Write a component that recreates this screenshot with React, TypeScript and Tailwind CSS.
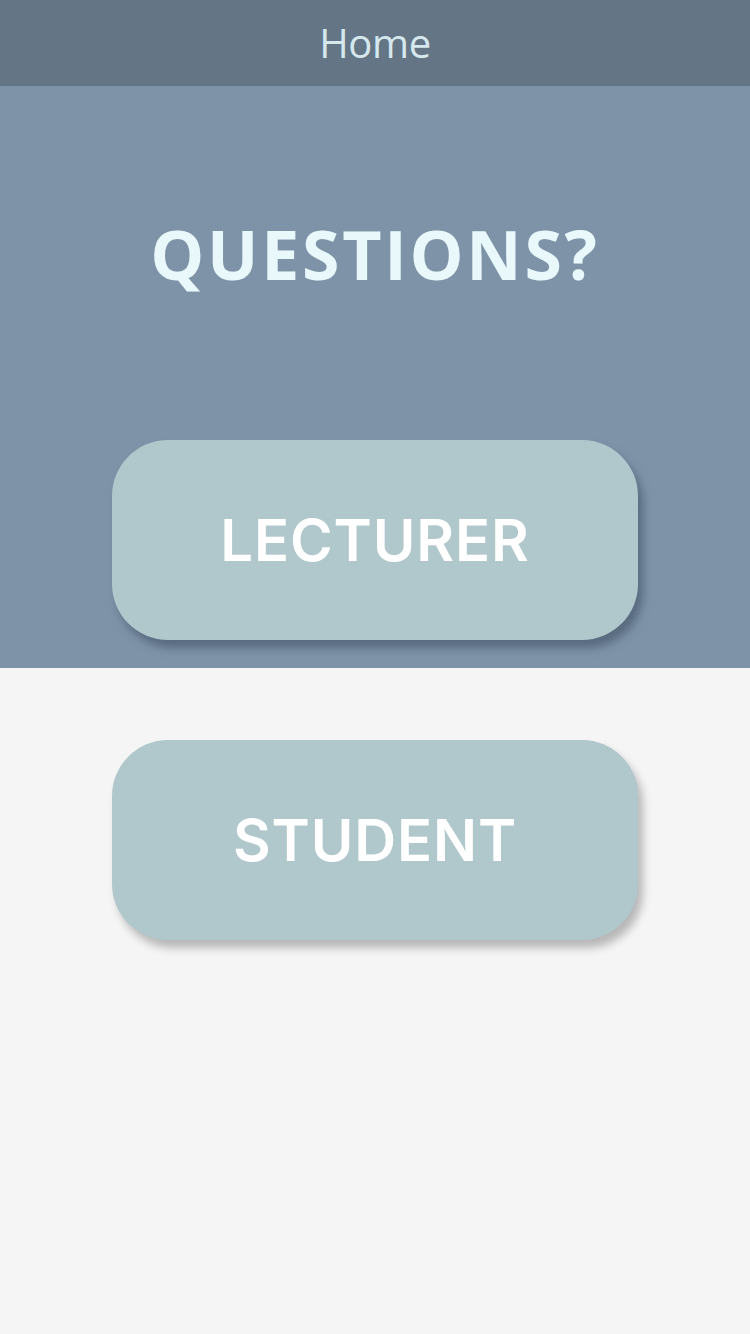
export default function App() {
  return (
    <div className="min-h-[1334px] w-[750px] bg-[#f5f5f5]">
      <header className="flex h-[86px] items-center justify-center bg-[#647586]">
        <h1 className="font-['Open_Sans',sans-serif] text-[40px] leading-none tracking-[-0.01em] text-[#d5e8ee]">Home</h1>
      </header>

      <section className="flex h-[582px] flex-col items-center bg-[#7e93a8]">
        <h2 className="mt-[130px] font-['Open_Sans',sans-serif] text-[68px] font-bold leading-[76px] tracking-[0.04em] text-[#e8f8fb]">
          QUESTIONS?
        </h2>
        <button className="mt-[148px] flex h-[200px] w-[526px] items-center justify-center rounded-[56px] bg-[#b0c7cc] font-['Inter',sans-serif] text-[58px] font-semibold tracking-[0.015em] text-white shadow-[5px_8px_8px_rgba(60,75,95,0.55)]">
          LECTURER
        </button>
      </section>

      <div className="flex justify-center pt-[72px]">
        <button className="flex h-[200px] w-[526px] items-center justify-center rounded-[56px] bg-[#b0c7cc] font-['Inter',sans-serif] text-[58px] font-semibold tracking-[0.015em] text-white shadow-[5px_8px_8px_rgba(0,0,0,0.25)]">
          STUDENT
        </button>
      </div>
    </div>
  );
}
